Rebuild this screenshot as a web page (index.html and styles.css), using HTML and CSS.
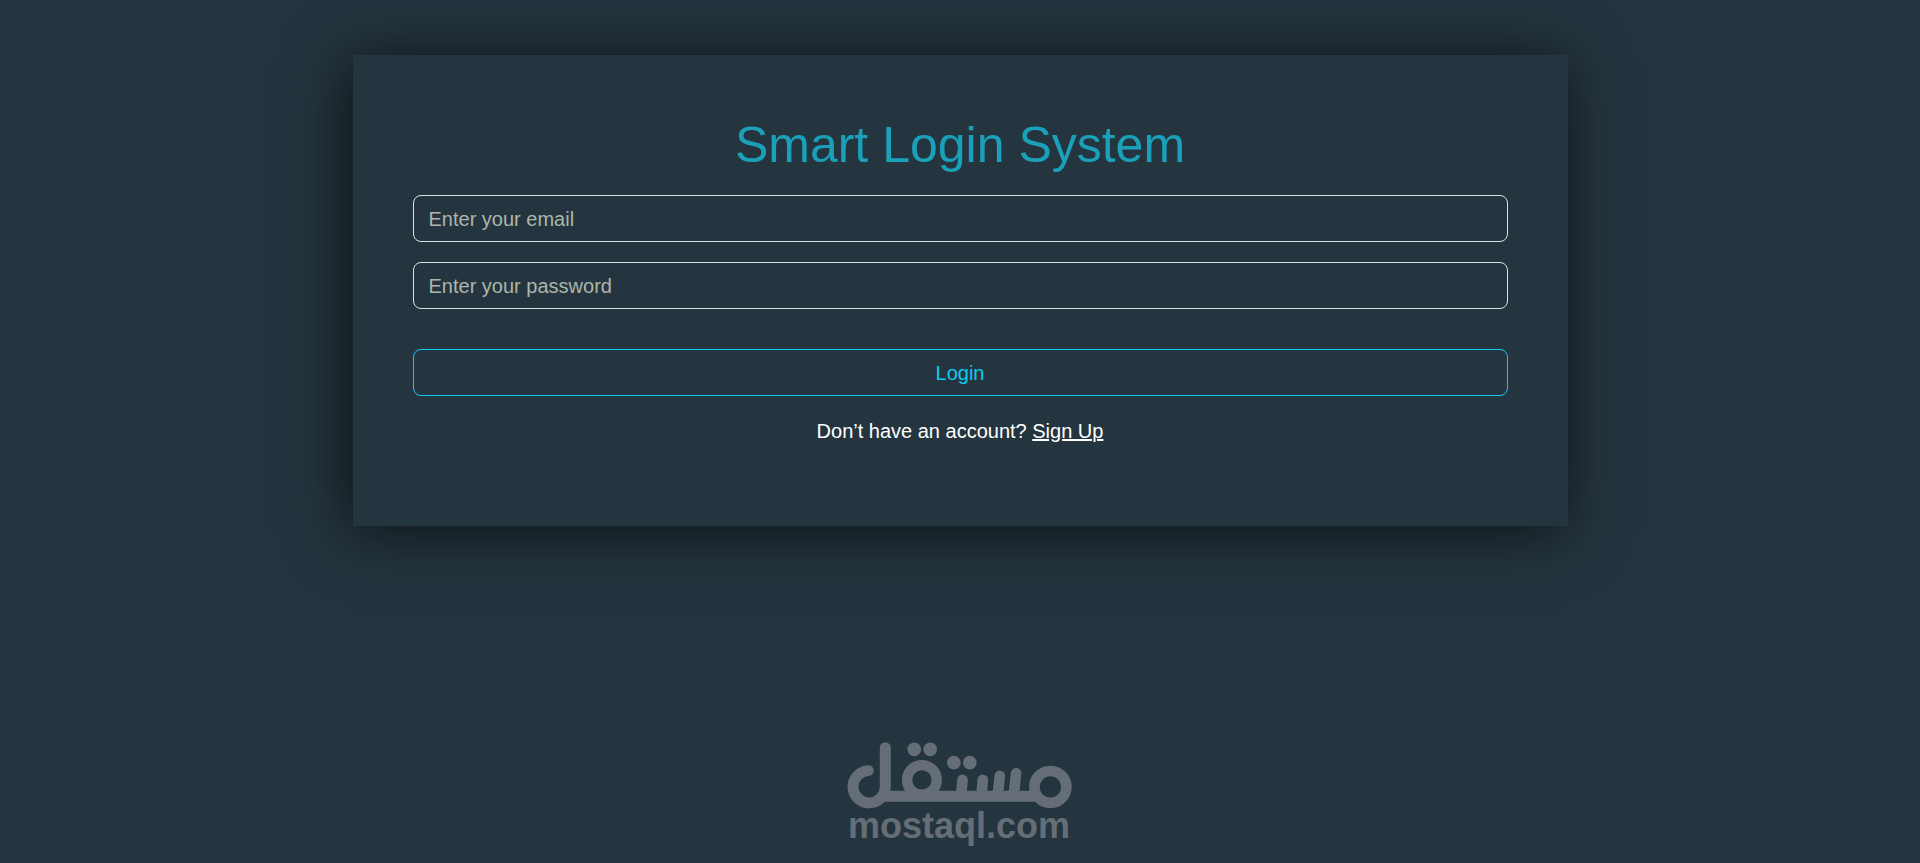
FILE: index.html
```html
<!DOCTYPE html>
<html lang="en">
<head>
<meta charset="utf-8">
<meta name="viewport" content="width=device-width, initial-scale=1">
<title>Smart Login System</title>
<link rel="stylesheet" href="styles.css">
</head>
<body>
<main class="card">
  <h1 class="title">Smart Login System</h1>
  <form class="form">
    <input class="field" type="email" placeholder="Enter your email" aria-label="Email">
    <input class="field" type="password" placeholder="Enter your password" aria-label="Password">
    <button class="submit" type="button">Login</button>
  </form>
  <p class="signup">Don’t have an account? <a href="#signup">Sign Up</a></p>
</main>
<footer class="brand">
  <svg class="brand-mark" viewBox="50 36 676 200" fill="none" stroke="currentColor" stroke-width="33" stroke-linecap="round" aria-hidden="true">
    <path d="M114 122A48.500 48.500 0 1 0 165 170V53"/>
    <path d="M160 199H625" stroke-linecap="butt"/>
    <circle cx="275" cy="150" r="44.500" stroke-width="31"/>
    <circle cx="661" cy="171" r="48" stroke-width="32"/>
    <path d="M397 150L393 195M458 150L454 195M509 138L503 195M558 130L551 195" stroke-width="32"/>
    <g fill="currentColor" stroke="none">
      <circle cx="252" cy="58" r="20.500"/>
      <circle cx="300" cy="58" r="20.500"/>
      <circle cx="371" cy="98" r="20.500"/>
      <circle cx="419" cy="98" r="20.500"/>
    </g>
  </svg>
  <span class="brand-name">mostaql.com</span>
</footer>
</body>
</html>
```
FILE: styles.css
```css
* {
  box-sizing: border-box;
}

body {
  margin: 0;
  min-height: 100vh;
  padding: 55px 20px 20px;
  display: flex;
  flex-direction: column;
  align-items: center;
  background: #25353f;
  color: #fff;
  font-family: "Liberation Sans", Arial, sans-serif;
  font-size: 20px;
  line-height: 30px;
}

.card {
  width: 100%;
  max-width: 1215px;
  padding: 60px 60px 80px;
  background: #25353f;
  box-shadow: -5px 5px 60px rgba(0, 0, 0, 0.7);
  text-align: center;
}

.title {
  margin: 0 0 20px;
  color: #1ba0b9;
  font-size: 50px;
  font-weight: 400;
  line-height: 60px;
}

.form {
  display: flex;
  flex-direction: column;
  gap: 20px;
}

.field,
.submit {
  width: 100%;
  height: 47px;
  padding: 0 15px;
  border: 1px solid #dee2e6;
  border-radius: 8px;
  background: transparent;
  color: #fff;
  font: inherit;
}

.field {
  padding-top: 2px;
}

.field::placeholder {
  color: #adb5ad;
  opacity: 1;
}

.submit {
  margin-top: 20px;
  border-color: #0dcaf0;
  color: #0dcaf0;
  cursor: pointer;
}

.signup {
  margin: 20px 0 0;
}

.signup a {
  color: inherit;
}

.brand {
  margin-top: auto;
  padding-right: 2px;
  display: flex;
  flex-direction: column;
  align-items: center;
  color: #656e76;
}

.brand-mark {
  display: block;
  width: 225px;
}

.brand-name {
  font-size: 36px;
  font-weight: 700;
  line-height: 34px;
}
```
